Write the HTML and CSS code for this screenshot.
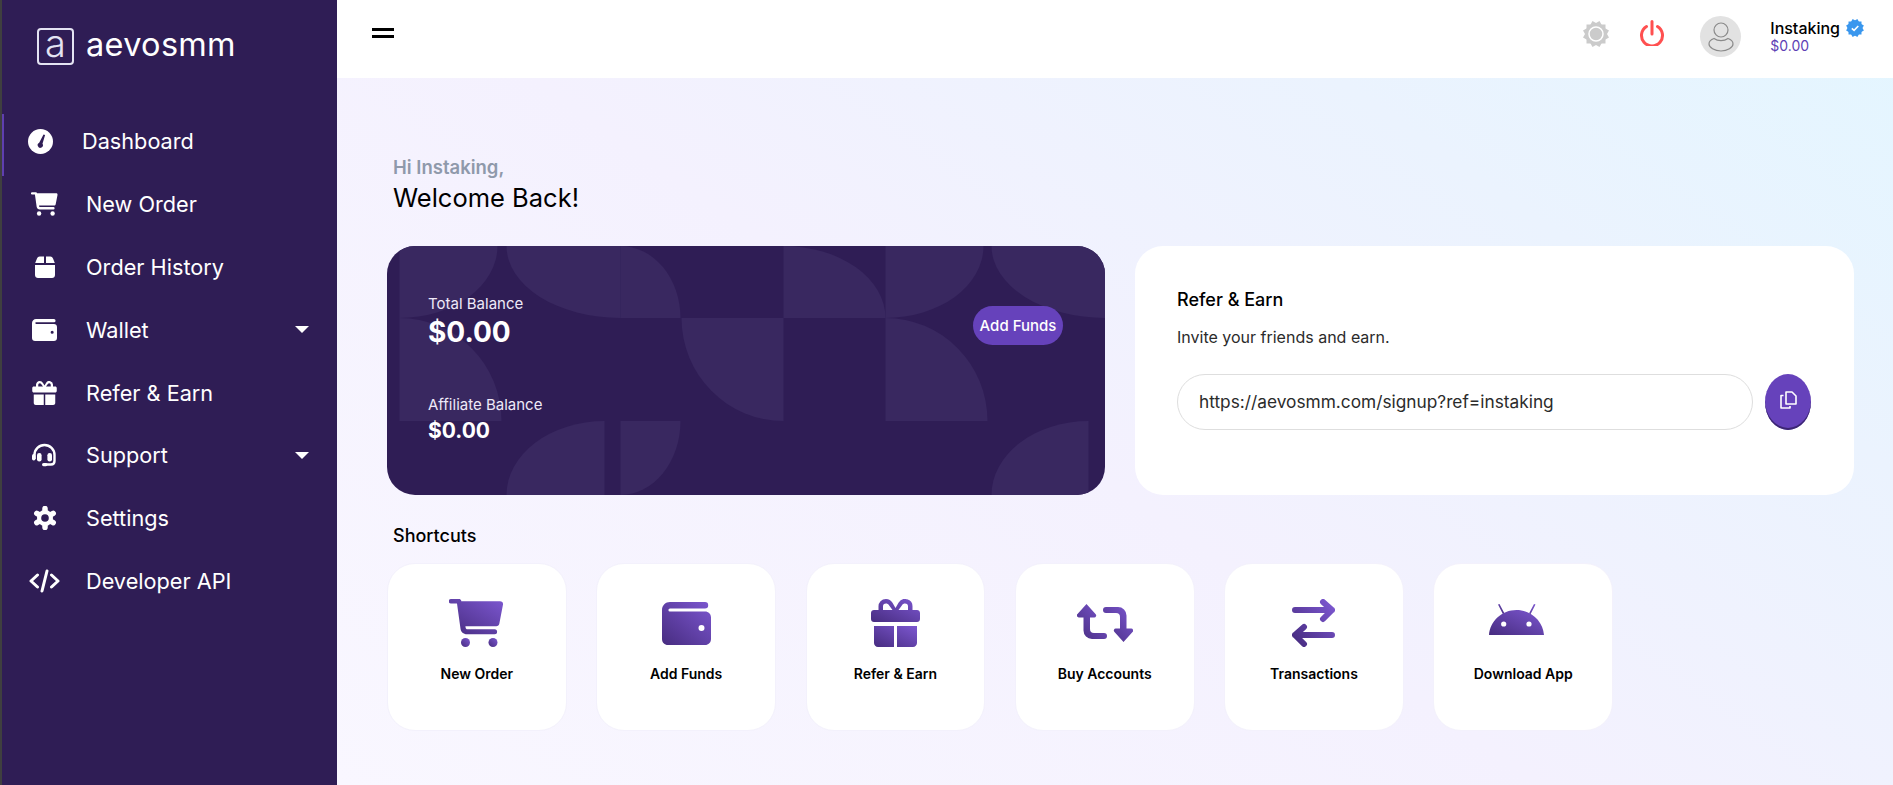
FILE: index.html
```html
<!DOCTYPE html>
<html lang="en">
<head>
    <meta charset="UTF-8">
    <meta name="viewport" content="width=device-width, initial-scale=1.0">
    <title>aevosmm - Dashboard</title>
    <link rel="stylesheet" href="styles.css">
</head>
<body>
    <svg class="defs" width="0" height="0" aria-hidden="true">
        <defs>
            <linearGradient id="iconGrad" x1="0" y1="1" x2="1" y2="0">
                <stop offset="0" stop-color="#472c80"/>
                <stop offset="1" stop-color="#7c57d0"/>
            </linearGradient>
            <symbol id="i-cart" viewBox="0 0 55 48">
                <path d="M2 0h8c1 0 2 .6 2.2 1.6l.1.6H51c2 0 3.3 1.3 3 3.3l-3.700 19.200c-.3 1.600-1.400 2.500-3 2.500H16.400l.2 1.300c.1 1.200.8 1.800 2 1.800h27a2.500 2.500 0 0 1 0 5H18c-3.700 0-6-2.300-6.500-5.500L8 4.500H2A2.200 2.200 0 0 1 2 0z"/>
                <circle cx="16.500" cy="43.500" r="4.500"/>
                <circle cx="44" cy="43.500" r="4.500"/>
            </symbol>
            <symbol id="i-wallet" viewBox="0 0 49 43">
                <path fill-rule="evenodd" d="M8 0h35a3.200 3.200 0 0 1 0 6.400H8a1.600 1.600 0 0 0 0 3.200h35c3.500 0 6 2.500 6 6V37c0 3.500-2.500 6-6 6H6c-3.500 0-6-2.500-6-6V8c0-4.500 3.500-8 8-8zM39.500 23a3 3 0 1 0 0 6 3 3 0 0 0 0-6z"/>
            </symbol>
            <symbol id="i-gift" viewBox="0 0 49 48">
                <path fill-rule="evenodd" d="M15 0a7.500 7.500 0 0 1 6.500 3.800L24.500 9l3-5.200A7.500 7.500 0 0 1 41.500 8v3H46c1.700 0 3 1.300 3 3v6c0 1.700-1.300 3-3 3H3c-1.700 0-3-1.300-3-3v-6c0-1.700 1.300-3 3-3h4.500V8A7.500 7.500 0 0 1 15 0zM15 4.500a3.200 3.200 0 0 0-3 3.500v3h9.500L17.800 6c-.6-1-1.600-1.500-2.800-1.500zM34 4.500c-1.200 0-2.200.5-2.800 1.500l-3.700 5H37V8a3.200 3.200 0 0 0-3-3.500z"/>
                <path d="M3 27h20v21H7c-2.200 0-4-1.800-4-4zM26 27h20v17c0 2.200-1.800 4-4 4H26z"/>
            </symbol>
        </defs>
    </svg>

    <div class="app">
        <aside class="sidebar">
            <div class="logo">
                <span class="logo-box">a</span>
                <span class="logo-text">aevosmm</span>
            </div>
            <nav class="nav">
                <a class="nav-item active" href="#">
                    <span class="nav-icon">
                        <svg width="25" height="25" viewBox="0 0 25 25">
                            <circle cx="12.500" cy="12.500" r="12.500" fill="#fff"/>
                            <path d="M15.500 5.500l1.600.6-2.600 8.700a2.600 2.600 0 1 1-3.300-1z" fill="#2f1d55"/>
                        </svg>
                    </span>
                    Dashboard
                </a>
                <a class="nav-item" href="#">
                    <span class="nav-icon"><svg width="27" height="24" fill="#fff"><use href="#i-cart"/></svg></span>
                    New Order
                </a>
                <a class="nav-item" href="#">
                    <span class="nav-icon">
                        <svg width="22" height="22" viewBox="0 0 22 22" fill="#fff">
                            <path d="M1.200 7L3 2.500C3.500 1.300 4.400.5 5.700.5H10V7zM12 .5h4.300c1.300 0 2.200.8 2.700 2L20.800 7H12z"/>
                            <path d="M1 9h20v10c0 1.700-1.300 3-3 3H4c-1.700 0-3-1.300-3-3z"/>
                        </svg>
                    </span>
                    Order History
                </a>
                <a class="nav-item" href="#">
                    <span class="nav-icon"><svg width="25" height="22" fill="#fff"><use href="#i-wallet"/></svg></span>
                    Wallet
                    <span class="caret"></span>
                </a>
                <a class="nav-item" href="#">
                    <span class="nav-icon"><svg width="25" height="24" fill="#fff"><use href="#i-gift"/></svg></span>
                    Refer &amp; Earn
                </a>
                <a class="nav-item" href="#">
                    <span class="nav-icon">
                        <svg width="25" height="25" viewBox="0 0 25 25" fill="#fff">
                            <path d="M2.500 16v-4a10 10 0 0 1 20 0v6c0 2-1.500 3.500-3.500 3.500h-5" fill="none" stroke="#fff" stroke-width="2.400"/>
                            <rect x="5" y="10" width="4.600" height="8.500" rx="2.200"/>
                            <rect x="15.400" y="10" width="4.600" height="8.500" rx="2.200"/>
                            <rect x="10" y="20" width="5.500" height="3.200" rx="1.600"/>
                            <rect x="0" y="11" width="3.500" height="6.500" rx="1.700"/>
                        </svg>
                    </span>
                    Support
                    <span class="caret"></span>
                </a>
                <a class="nav-item" href="#">
                    <span class="nav-icon">
                        <svg width="24" height="24" viewBox="0 0 24 24">
                            <path d="M12 2.500v19M3.800 7.300l16.400 9.400M20.200 7.300L3.800 16.700" stroke="#fff" stroke-width="5.500" stroke-linecap="round"/>
                            <circle cx="12" cy="12" r="8" fill="#fff"/>
                            <circle cx="12" cy="12" r="3.800" fill="#2f1d55"/>
                        </svg>
                    </span>
                    Settings
                </a>
                <a class="nav-item" href="#">
                    <span class="nav-icon">
                        <svg width="31" height="24" viewBox="0 0 31 24" fill="none" stroke="#fff" stroke-width="3" stroke-linecap="round" stroke-linejoin="round">
                            <path d="M8.500 6L2 12l6.500 6M22.500 6L29 12l-6.500 6M18 2l-5 20"/>
                        </svg>
                    </span>
                    Developer API
                </a>
            </nav>
        </aside>

        <div class="main">
            <header class="topbar">
                <button class="menu-btn" aria-label="Menu"></button>
                <div class="top-right">
                    <svg class="top-gear" width="28" height="28" viewBox="0 0 28 28">
                        <g fill="#cbcbcb">
                            <rect x="4.500" y="4.500" width="19" height="19"/>
                            <rect x="4.500" y="4.500" width="19" height="19" transform="rotate(30 14 14)"/>
                            <rect x="4.500" y="4.500" width="19" height="19" transform="rotate(60 14 14)"/>
                        </g>
                        <circle cx="14" cy="14" r="7" fill="#cbcbcb" stroke="#fff" stroke-width="1.500"/>
                    </svg>
                    <svg class="top-power" width="26" height="26" viewBox="0 0 26 26" fill="none" stroke="#ff5050" stroke-width="3" stroke-linecap="round">
                        <path d="M7.500 6.500a10.500 10.500 0 1 0 11 0M13 1.500V14"/>
                    </svg>
                    <div class="avatar">
                        <svg width="26" height="30" viewBox="0 0 26 30" fill="none" stroke="#8a8a8a" stroke-width="1.200">
                            <circle cx="13" cy="8" r="7"/>
                            <path d="M6 16.500C3 17.500 1 19.500 1 22c0 3.500 5.500 7 12 7s12-3.500 12-7c0-2.500-2-4.500-5-5.500-2 1.500-4 2.200-7 2.200s-5-.7-7-2.200z"/>
                        </svg>
                    </div>
                    <div class="user">
                        <div class="user-name">Instaking
                            <svg width="18" height="18" viewBox="0 0 18 18">
                                <g fill="#3a97ee">
                                    <rect x="2.500" y="2.500" width="13" height="13"/>
                                    <rect x="2.500" y="2.500" width="13" height="13" transform="rotate(30 9 9)"/>
                                    <rect x="2.500" y="2.500" width="13" height="13" transform="rotate(60 9 9)"/>
                                </g>
                                <path d="M5.800 9.300l2.300 2.100 4.200-4.400" fill="none" stroke="#fff" stroke-width="1.600"/>
                            </svg>
                        </div>
                        <div class="user-bal">$0.00</div>
                    </div>
                </div>
            </header>

            <main class="content">
                <p class="hi">Hi Instaking,</p>
                <h1 class="welcome">Welcome Back!</h1>

                <div class="cards">
                    <section class="balance-card">
                        <svg class="pattern" width="718" height="249" viewBox="0 0 717 249" fill="#392860">
                            <path d="M12 0H110A98 72 0 0 1 12 72Z"/>
                            <path d="M119 0H233V72A114 72 0 0 1 119 0Z"/>
                            <path d="M233 0A60 72 0 0 1 293 72H233Z"/>
                            <path d="M294 72H396V175A102 103 0 0 1 294 72Z"/>
                            <path d="M396 0A102 72 0 0 1 498 72H396Z"/>
                            <path d="M498 0H596A98 72 0 0 1 498 72Z"/>
                            <path d="M604 0H718V72A114 72 0 0 1 604 0Z"/>
                            <path d="M498 72A102 103 0 0 1 600 175H498Z"/>
                            <path d="M12 72A102 103 0 0 1 114 175H12Z"/>
                            <path d="M217 175V249H119A98 74 0 0 1 217 175Z"/>
                            <path d="M233 175H293A60 74 0 0 1 233 249Z"/>
                            <path d="M701 175V249H604A97 74 0 0 1 701 175Z"/>
                        </svg>
                        <div class="balances">
                            <div class="bal-label">Total Balance</div>
                            <div class="bal-total">$0.00</div>
                            <div class="bal-label bal-second">Affiliate Balance</div>
                            <div class="bal-aff">$0.00</div>
                        </div>
                        <button class="add-funds">Add Funds</button>
                    </section>

                    <section class="refer-card">
                        <h2>Refer &amp; Earn</h2>
                        <p>Invite your friends and earn.</p>
                        <div class="refer-row">
                            <input class="refer-input" type="text" readonly value="https://aevosmm.com/signup?ref=instaking">
                            <button class="copy-btn" aria-label="Copy">
                                <svg width="17" height="18" viewBox="0 0 17 18" fill="none" stroke="#fff" stroke-width="1.600" stroke-linejoin="round">
                                    <path d="M6 1h6l4 4v8H6z"/>
                                    <path d="M3.500 4.500H1V17h9v-2"/>
                                </svg>
                            </button>
                        </div>
                    </section>
                </div>

                <h3 class="shortcuts-title">Shortcuts</h3>
                <div class="shortcuts">
                    <a class="shortcut" href="#">
                        <span class="shortcut-icon"><svg width="55" height="48" fill="url(#iconGrad)"><use href="#i-cart"/></svg></span>
                        New Order
                    </a>
                    <a class="shortcut" href="#">
                        <span class="shortcut-icon"><svg width="49" height="43" fill="url(#iconGrad)"><use href="#i-wallet"/></svg></span>
                        Add Funds
                    </a>
                    <a class="shortcut" href="#">
                        <span class="shortcut-icon"><svg width="49" height="48" fill="url(#iconGrad)"><use href="#i-gift"/></svg></span>
                        Refer &amp; Earn
                    </a>
                    <a class="shortcut" href="#">
                        <span class="shortcut-icon">
                            <svg width="56" height="38" viewBox="0 0 56 38" fill="url(#iconGrad)">
                                <path d="M9.500 0L18.500 10a2 2 0 0 1-1.500 3.500H13V25a4 4 0 0 0 4 4H27a3 3 0 0 1 0 6H15a8.500 8.500 0 0 1-8.500-8.500V13.500H2A2 2 0 0 1 .5 10Z"/>
                                <path d="M46.500 38L37.500 28a2 2 0 0 1 1.500-3.500H43V13a4 4 0 0 0-4-4H29a3 3 0 0 1 0-6H41a8.500 8.500 0 0 1 8.500 8.500V24.500H54A2 2 0 0 1 55.500 28Z"/>
                            </svg>
                        </span>
                        Buy Accounts
                    </a>
                    <a class="shortcut" href="#">
                        <span class="shortcut-icon">
                            <svg width="43" height="48" viewBox="0 0 43 48" fill="none" stroke="url(#iconGrad)" stroke-width="6" stroke-linecap="round" stroke-linejoin="round">
                                <path d="M3 11H40M31 3l9 8-9 9M40 36H3M12 28l-9 8 9 9"/>
                            </svg>
                        </span>
                        Transactions
                    </a>
                    <a class="shortcut" href="#">
                        <span class="shortcut-icon android-icon">
                            <svg width="55" height="31" viewBox="0 0 55 31" fill="url(#iconGrad)">
                                <path d="M9 .5L10.500 0l5 9.500-1.500.7zM46.500.5L45 0l-5 9.500 1.500.7z"/>
                                <path fill-rule="evenodd" d="M0 31C1 17 13 6 27.500 6S54 17 55 31ZM14.700 17.400a2.600 2.600 0 1 0 0 5.200 2.600 2.600 0 0 0 0-5.200zM40 17.400a2.600 2.600 0 1 0 0 5.200 2.600 2.600 0 0 0 0-5.200z"/>
                            </svg>
                        </span>
                        Download App
                    </a>
                </div>
            </main>
        </div>
    </div>
</body>
</html>
```

FILE: styles.css
```css
* {
    box-sizing: border-box;
}

html, body {
    height: 100%;
}

body {
    margin: 0;
    font-family: 'Inter', 'Liberation Sans', sans-serif;
    color: #000;
    overflow: hidden;
}

.defs {
    position: absolute;
}

.app {
    display: flex;
    height: 100%;
}

/* sidebar */
.sidebar {
    flex: 0 0 337px;
    background-color: #2f1d55;
    border-left: 2px solid #3f3f3f;
    color: #fff;
}

.logo {
    display: flex;
    align-items: center;
    height: 113.500px;
    padding: 0 0 20.500px 35px;
}

.logo-box {
    display: flex;
    align-items: center;
    justify-content: center;
    width: 37px;
    height: 37px;
    border: 2px solid #e4e3f2;
    border-radius: 4px;
    font-size: 38px;
    font-weight: 300;
    line-height: 1;
    padding-bottom: 7px;
    color: #e4e3f2;
}

.logo-text {
    margin: 0 0 4px 12px;
    font-size: 32.500px;
    letter-spacing: .3px;
}

.nav-item {
    display: flex;
    align-items: center;
    height: 62.800px;
    padding: 0 28px 7px 27px;
    font-size: 21.700px;
    color: #fff;
    text-decoration: none;
}

.nav-item.active {
    border-left: 2px solid #5f3fb0;
    padding-left: 21px;
}

.nav-icon {
    display: flex;
    align-items: center;
    justify-content: center;
    width: 31px;
    margin-right: 26px;
}

.caret {
    margin-left: auto;
    width: 0;
    height: 0;
    border-left: 7px solid transparent;
    border-right: 7px solid transparent;
    border-top: 7px solid #fff;
}

/* top bar */
.main {
    flex: 1;
    min-width: 0;
    display: flex;
    flex-direction: column;
    background: linear-gradient(215deg, #e3f6ff 0%, #ebf3fe 25%, #f4f1fe 55%, #f9f7ff 100%);
}

.topbar {
    flex: 0 0 78px;
    display: flex;
    align-items: center;
    justify-content: space-between;
    padding: 0 29px 12px 35px;
    background-color: #fff;
}

.menu-btn {
    width: 22px;
    height: 10px;
    padding: 0;
    background: none;
    border: none;
    border-top: 3px solid #000;
    border-bottom: 3px solid #000;
    cursor: pointer;
}

.top-right {
    display: flex;
    align-items: center;
}

.top-gear {
    margin: 2px 29px 0 0;
}

.top-power {
    margin-right: 35px;
}

.avatar {
    display: flex;
    align-items: center;
    justify-content: center;
    width: 41px;
    height: 41px;
    border-radius: 50%;
    background-color: #e2e2e2;
    margin: 7px 29px 0 0;
}

.user {
    margin-top: 4px;
}

.user-name {
    display: flex;
    align-items: center;
    gap: 6px;
    font-size: 16px;
    font-weight: 500;
    line-height: 20px;
}

.user-bal {
    margin-top: 1px;
    font-size: 14px;
    line-height: 14px;
    color: #5e3fb5;
}

/* content */
.content {
    padding: 77px 39px 0 50px;
}

.hi {
    margin: 0 0 0 6px;
    font-size: 18.500px;
    font-weight: 600;
    line-height: 24px;
    color: #8f99ab;
}

.welcome {
    margin: 1px 0 0 6px;
    font-size: 25.500px;
    font-weight: 400;
    line-height: 36px;
}

.cards {
    display: grid;
    grid-template-columns: 718px 719px;
    gap: 30px;
    margin-top: 30px;
}

.balance-card {
    position: relative;
    overflow: hidden;
    display: flex;
    align-items: center;
    justify-content: space-between;
    height: 249px;
    padding: 0 42px 0 41px;
    background-color: #2f1d55;
    border-radius: 28px;
    color: #fff;
}

.pattern {
    position: absolute;
    top: 0;
    left: 0;
}

.balances, .add-funds {
    position: relative;
}

.bal-label {
    font-size: 15px;
    line-height: 20px;
    color: #eee9f8;
}

.bal-second {
    margin-top: 46px;
}

.bal-total {
    margin-top: 1px;
    font-size: 28px;
    font-weight: 700;
    line-height: 34px;
}

.bal-aff {
    font-size: 21px;
    font-weight: 700;
    line-height: 32px;
}

.add-funds {
    width: 90px;
    height: 39px;
    padding: 0;
    margin-bottom: 90px;
    font-family: inherit;
    font-size: 15px;
    font-weight: 500;
    color: #fff;
    background-color: #6642bb;
    border: none;
    border-radius: 20px;
    cursor: pointer;
}

.refer-card {
    height: 249px;
    padding: 42px 43px 0 42px;
    background-color: #fff;
    border-radius: 28px;
}

.refer-card h2 {
    margin: 0;
    font-size: 18px;
    font-weight: 500;
    line-height: 24px;
}

.refer-card p {
    margin: 13px 0 0;
    font-size: 16px;
    line-height: 24px;
    color: #2b2b2b;
}

.refer-row {
    display: flex;
    gap: 12px;
    margin-top: 25px;
}

.refer-input {
    flex: 1;
    min-width: 0;
    height: 56px;
    padding: 0 21px 2px;
    font-family: inherit;
    font-size: 17.300px;
    color: #2b2b2b;
    background-color: #fff;
    border: 1.500px solid #dedede;
    border-radius: 28px;
    outline: none;
}

.copy-btn {
    flex: 0 0 46px;
    display: flex;
    align-items: center;
    justify-content: center;
    padding: 0 0 4px;
    height: 56px;
    background-color: #6642bb;
    border: none;
    border-radius: 50%;
    box-shadow: inset 0 -2px 0 #3c2672;
    cursor: pointer;
}

.shortcuts-title {
    margin: 29px 0 0 6px;
    font-size: 18px;
    font-weight: 500;
    line-height: 24px;
}

.shortcuts {
    display: grid;
    grid-template-columns: repeat(6, 179.700px);
    gap: 29.600px;
    margin-top: 15px;
}

.shortcut {
    display: flex;
    flex-direction: column;
    align-items: center;
    height: 168px;
    padding-top: 35px;
    font-size: 14px;
    font-weight: 600;
    color: #000;
    text-decoration: none;
    background-color: #fff;
    border: 1px solid #f3f1fc;
    border-radius: 28px;
}

.shortcut-icon {
    display: flex;
    align-items: center;
    justify-content: center;
    height: 48px;
    margin-bottom: 18px;
}

.android-icon svg {
    margin: 0 14px 7px 0;
}
```
